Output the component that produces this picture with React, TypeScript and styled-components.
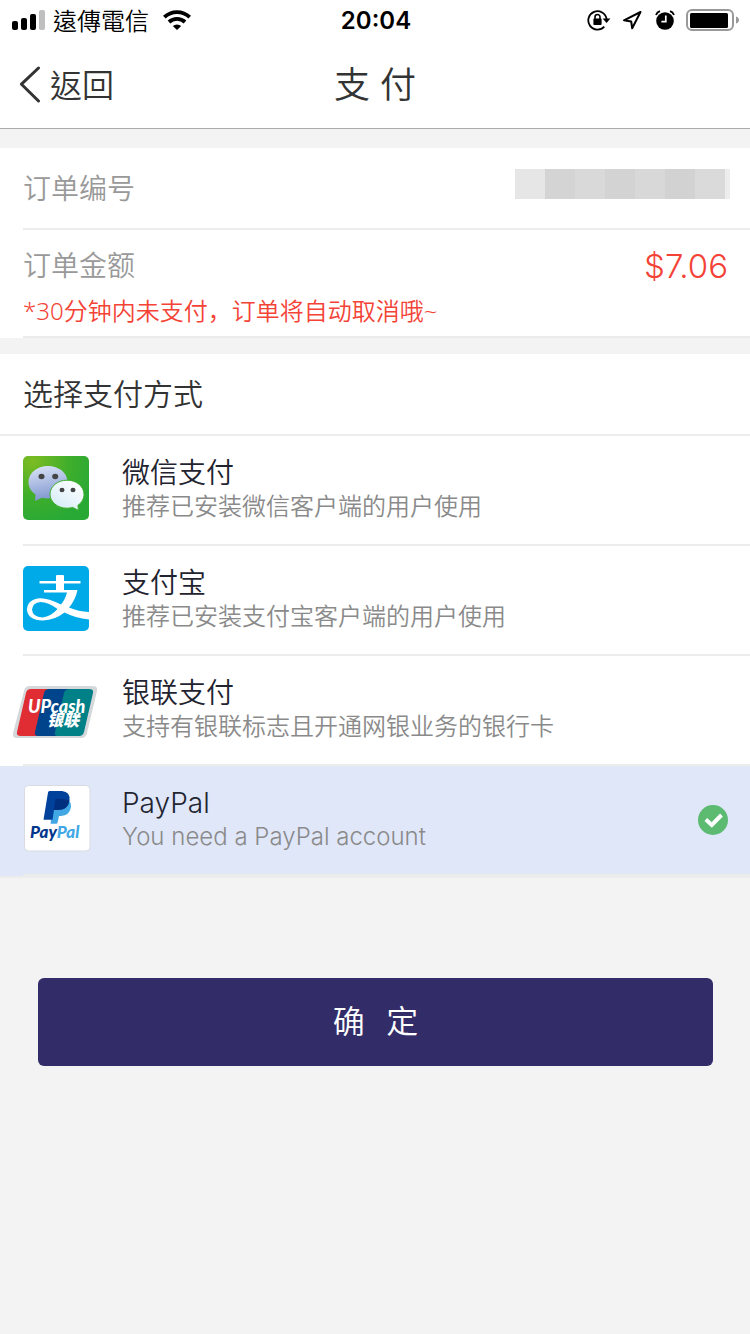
import React, { useState } from 'react';
import styled, { createGlobalStyle } from 'styled-components';

const GlobalStyle = createGlobalStyle`
  *, *::before, *::after { box-sizing: border-box; }
  body {
    margin: 0;
    background: #f3f3f3;
    color: #333;
    font-family: Inter, "Noto Sans CJK SC", sans-serif;
    font-weight: 350;
  }
  h1, h2, p, dl, dt, dd { margin: 0; font-weight: inherit; }
`;

const StatusBar = styled.div`
  display: grid;
  grid-template-columns: 1fr auto 1fr;
  align-items: center;
  height: 40px;
  padding: 0 10px 0 12px;
  background: #fff;
  color: #000;
`;

const StatusGroup = styled.div<{ $end?: boolean }>`
  display: flex;
  align-items: center;
  gap: ${(p) => (p.$end ? 11 : 8)}px;
  justify-content: ${(p) => (p.$end ? 'flex-end' : 'flex-start')};
`;

const Carrier = styled.span`
  margin-right: 6px;
  font: 350 24px/32px "Noto Sans CJK TC", sans-serif;
`;

const Clock = styled.time`
  padding-top: 2px;
  font-size: 24px;
  line-height: 32px;
  font-weight: 600;
`;

const NavBar = styled.header`
  display: grid;
  grid-template-columns: 1fr auto 1fr;
  align-items: center;
  height: 89px;
  padding: 0 18px;
  background: #fff;
  border-bottom: 1px solid #aaa;
`;

const BackButton = styled.button`
  display: flex;
  align-items: center;
  justify-self: start;
  gap: 8px;
  padding: 0;
  border: 0;
  background: none;
  color: #333;
  font: 350 32px/36px "Noto Sans CJK TC", sans-serif;

  span { padding-bottom: 2px; }
`;

const NavTitle = styled.h1`
  padding-top: 2px;
  font-size: 36px;
  line-height: 40px;
`;

const Order = styled.dl`
  margin: 19px 0 16px;
  padding-left: 23px;
  background: #fff;
`;

const OrderRow = styled.div`
  padding: 16px 20px 8px 0;
  border-bottom: 2px solid #ececec;
`;

const OrderLine = styled.div`
  display: flex;
  align-items: center;
  justify-content: space-between;
  min-height: 40px;
  font-size: 28px;
  line-height: 40px;
`;

const OrderNumberRow = styled(OrderRow)`
  padding-top: 21px;
  padding-bottom: 19px;
`;

const Label = styled.dt`
  color: #999;
`;

const Redacted = styled.dd`
  display: flex;
  height: 30px;
  margin-bottom: 10px;
`;

const Block = styled.span<{ $tone: string; $narrow?: boolean }>`
  width: ${(p) => (p.$narrow ? 5 : 30)}px;
  background: ${(p) => p.$tone};
`;

const Amount = styled.dd`
  padding-right: 2px;
  color: #f44336;
  font-size: 33px;
`;

const Notice = styled.p`
  margin-top: 8px;
  color: #f44336;
  font-family: "Noto Sans", "Noto Sans CJK SC", sans-serif;
  font-size: 24px;
  line-height: 34px;
`;

const Methods = styled.fieldset`
  min-width: 0;
  margin: 0;
  padding: 0;
  border: 0;
  border-bottom: 2px solid #ececec;
  background: #fff;
`;

const MethodsTitle = styled.h2`
  padding: 20px 23px;
  border-bottom: 2px solid #ececec;
  font-size: 30px;
  line-height: 40px;
`;

const Method = styled.label<{ $selected: boolean }>`
  display: block;
  padding-left: 23px;
  background: ${(p) => (p.$selected ? '#e0e7f9' : '#fff')};
`;

const MethodBody = styled.span`
  display: flex;
  align-items: center;
  height: 110px;
  padding-right: 22px;
  border-bottom: 2px solid #ececec;
`;

const Logo = styled.span<{ $wide?: boolean }>`
  display: flex;
  flex: 0 0 auto;
  width: ${(p) => (p.$wide ? 109 : 99)}px;
  margin-left: ${(p) => (p.$wide ? -10 : 0)}px;
  padding: ${(p) => (p.$wide ? '4px 0 0' : '0 0 4px')};
`;

const MethodText = styled.span`
  display: flex;
  flex: 1;
  flex-direction: column;
  line-height: 34px;
`;

const MethodName = styled.span`
  color: #1f2430;
  font-size: 28px;
`;

const MethodHint = styled.span`
  color: #8a8a8a;
  font-size: 24px;
`;

const Check = styled.span`
  position: relative;
  display: flex;
  width: 30px;
  height: 30px;

  svg { position: absolute; inset: 0; visibility: hidden; pointer-events: none; }
  input:checked + svg { visibility: visible; }
`;

const Radio = styled.input`
  appearance: none;
  width: 30px;
  height: 30px;
  margin: 0;
  border-radius: 50%;
`;

const Footer = styled.div`
  padding: 100px 37px 40px 38px;
`;

const Confirm = styled.button`
  display: block;
  width: 100%;
  height: 88px;
  border: 0;
  border-radius: 6px;
  padding: 0 0 6px;
  background: #322d68;
  color: #fff;
  font: 350 32px/44px "Noto Sans CJK SC", sans-serif;
`;

const SignalIcon = () => (
  <svg width="33" height="20" viewBox="0 0 33 20" aria-hidden="true">
    <rect x="0" y="11" width="6" height="9" rx="2" />
    <rect x="9" y="8" width="6" height="12" rx="2" />
    <rect x="18" y="4" width="6" height="16" rx="2" />
    <rect x="27" y="0" width="6" height="20" rx="2" fill="#bfbfbf" />
  </svg>
);

const WifiIcon = () => (
  <svg width="28" height="20" viewBox="0 0 28 20" fill="none" stroke="#000" strokeWidth="3.800" aria-hidden="true">
    <path d="M1.300 7.200a18.200 18.200 0 0 1 25.400 0" />
    <path d="M6 12a11.600 11.600 0 0 1 16 0" />
    <path d="M9.800 16.100a6 6 0 0 1 8.400 0L14 20z" fill="#000" stroke="none" />
  </svg>
);

const RotationLockIcon = () => (
  <svg width="24" height="22" viewBox="0 0 24 22" fill="none" stroke="#000" strokeWidth="1.800" aria-hidden="true">
    <path d="M17.300 17.600A9.200 9.200 0 1 1 19.600 10" />
    <path d="M15.600 9.500h7.800L19.600 14z" fill="#000" stroke="none" />
    <rect x="6.400" y="9.400" width="8.200" height="6.600" rx="1" fill="#000" stroke="none" />
    <path d="M8 10V8a2.500 2.500 0 0 1 5 0v2" strokeWidth="1.600" />
  </svg>
);

const LocationIcon = () => (
  <svg width="22" height="22" viewBox="0 0 22 22" fill="none" stroke="#000" strokeWidth="2" strokeLinejoin="round" aria-hidden="true">
    <path d="M18.500 3 2 11.300l7.200 1.200 1 6.800z" />
  </svg>
);

const AlarmIcon = () => (
  <svg width="20" height="20" viewBox="0 0 20 20" fill="none" aria-hidden="true">
    <circle cx="10" cy="11" r="8.800" fill="#000" />
    <path d="M1 5A6 6 0 0 1 5 1.200M19 5A6 6 0 0 0 15 1.200" stroke="#000" strokeWidth="1.800" />
    <path d="M10.800 5.400v6.200H6.400" stroke="#fff" strokeWidth="1.700" />
  </svg>
);

const BatteryIcon = () => (
  <svg width="54" height="24" viewBox="0 0 54 24" fill="none" aria-hidden="true">
    <rect x="1" y="2" width="46" height="20" rx="5" stroke="#999" strokeWidth="2" />
    <rect x="4" y="5" width="38" height="15" rx="1.500" fill="#000" />
    <path d="M50 8.500c4 1 4 6 0 7z" fill="#999" />
  </svg>
);

const ChevronIcon = () => (
  <svg width="24" height="38" viewBox="0 0 24 38" fill="none" stroke="#333" strokeWidth="3" strokeLinecap="round" strokeLinejoin="round" aria-hidden="true">
    <path d="M20.500 3 3.500 19.200 20.500 36" />
  </svg>
);

const WeChatLogo = () => (
  <svg width="66" height="64" viewBox="0 0 66 64" aria-hidden="true">
    <defs>
      <radialGradient id="wxBack" cx=".15" cy=".08" r="1">
        <stop offset="0" stopColor="#7cbc22" />
        <stop offset=".55" stopColor="#3fae2b" />
        <stop offset="1" stopColor="#28a936" />
      </radialGradient>
      <linearGradient id="wxBlue" x1=".3" y1="0" x2=".5" y2="1">
        <stop offset="0" stopColor="#d8e1f5" />
        <stop offset="1" stopColor="#7c93cd" />
      </linearGradient>
      <linearGradient id="wxWhite" x1="0" y1="1" x2=".8" y2="0">
        <stop offset="0" stopColor="#cfe9f8" />
        <stop offset="1" stopColor="#fff" />
      </linearGradient>
    </defs>
    <rect width="66" height="64" rx="5" fill="url(#wxBack)" />
    <path d="M25 10C14 10 5.500 17 5.500 26c0 5.200 2.600 9.500 7 12.400L12 45l7-3.300c2 .5 4 .7 6 .7 11 0 19.500-7.200 19.500-16.400S36 10 25 10z" fill="url(#wxBlue)" />
    <path d="M44 24.200c-9.400 0-17 6.200-17 14s7.600 14 17 14c2 0 4-.3 5.700-.8l5.800 2.900-.6-5c3.800-2.600 6.100-6.600 6.100-11.100 0-7.800-7.600-14-17-14z" fill="url(#wxWhite)" stroke="#3fae2b" strokeWidth="1" />
    <g fill="#444">
      <ellipse cx="18.500" cy="20.500" rx="3" ry="2.700" />
      <ellipse cx="32.200" cy="20.500" rx="3" ry="2.700" />
      <ellipse cx="39" cy="34" rx="2.500" ry="2.200" />
      <ellipse cx="50" cy="34" rx="2.500" ry="2.200" />
    </g>
  </svg>
);

const AlipayLogo = () => (
  <svg width="66" height="65" viewBox="0 0 66 65" aria-hidden="true">
    <rect width="66" height="65" rx="5" fill="#00a9e8" />
    <path
      d="M33 10q0-1 1-1h6q1 0 1 1v5h16.500v2.600H41V24h13.500q-2 10-8.500 17.500 9.500 4 20 4.500v7.500Q52 52 41.500 46.500 32 54 20 54.500 4.500 54 4 43.500 4.500 33 17.500 32.300 25 32.200 38 38.500 42 34 44 26.500H21V24h12v-6.400H16.500V15H33zM34.500 43Q25 36 17.500 36 9.500 36.500 9 43.500q.5 7.500 10.500 8Q28 50.500 34.500 43z"
      fill="#fff"
      fillRule="evenodd"
    />
  </svg>
);

const UnionPayLogo = () => (
  <svg width="84" height="52" viewBox="0 0 84 52" aria-hidden="true">
    <path d="M17 0h63q5 0 4 5L74 47q-1 5-6 5H4q-5 0-4-5L11 5q1-5 6-5z" fill="#d5d8db" />
    <path d="M18 3h18L24 50H8q-5 0-4-4L13 7q1-4 5-4z" fill="#df2d33" />
    <path d="M36 3h24L48 50H25q-4 0-3-4l9-39q1-4 5-4z" fill="#00458c" />
    <path d="M57 3h19q5 0 4 4l-9 39q-1 4-5 4H45q-4 0-3-4l9-39q1-4 6-4z" fill="#008087" />
    <g fill="#fff" fontStyle="italic" fontWeight="900">
      <text x="15" y="27" fontSize="18" fontFamily="Lato, sans-serif">UPcash</text>
      <text x="34" y="40" fontSize="16" fontFamily="Noto Sans CJK SC, sans-serif">银联</text>
    </g>
  </svg>
);

const PayPalLogo = () => (
  <svg width="68" height="67" viewBox="0 0 68 67" aria-hidden="true">
    <rect x="1.500" y=".5" width="65.500" height="65.500" rx="4" fill="#fff" stroke="#d9dbe3" />
    <path d="M31 14h13q4.500 2.500 4 8-1.500 8.500-10 9h-2L34.600 37.500q-.2 1.200-1.400 1.200H27.500z" fill="#41a8e5" />
    <path d="M26.500 6H39q8.500.8 7.500 9.500Q45 25 35 25h-4l-1.500 9.700H20.500L25 7.500Q25.200 6 26.500 6z" fill="#00429b" />
    <path d="M33.500 13.800q7-.6 12.800 1.800Q45 25 35 25h-4l1.300-9.800q.2-1.300 1.200-1.400z" fill="#002f80" />
    <text x="7" y="53" fontSize="17" fontWeight="900" fontStyle="italic" fontFamily="Lato, sans-serif" fill="#00368c">
      Pay<tspan fill="#41a8e5">Pal</tspan>
    </text>
  </svg>
);

const CheckIcon = () => (
  <svg width="30" height="30" viewBox="0 0 30 30" fill="none" aria-hidden="true">
    <circle cx="15" cy="15" r="15" fill="#5cba71" />
    <path d="m7.800 14.500 6 5.500L23.500 10" stroke="#fff" strokeWidth="4" />
  </svg>
);

const redactedTones = ['#e6e6e6', '#d4d4d4', '#d9d9d9', '#d3d3d3', '#d8d8d8', '#d2d2d2', '#dadada', '#ededed'];

const methods = [
  { id: 'wechat', name: '微信支付', hint: '推荐已安装微信客户端的用户使用', logo: <WeChatLogo /> },
  { id: 'alipay', name: '支付宝', hint: '推荐已安装支付宝客户端的用户使用', logo: <AlipayLogo /> },
  { id: 'unionpay', name: '银联支付', hint: '支持有银联标志且开通网银业务的银行卡', logo: <UnionPayLogo />, wide: true },
  { id: 'paypal', name: 'PayPal', hint: 'You need a PayPal account', logo: <PayPalLogo /> },
];

export default function App() {
  const [selected, setSelected] = useState('paypal');

  return (
    <>
      <GlobalStyle />
      <StatusBar>
        <StatusGroup>
          <SignalIcon />
          <Carrier>遠傳電信</Carrier>
          <WifiIcon />
        </StatusGroup>
        <Clock>20:04</Clock>
        <StatusGroup $end>
          <RotationLockIcon />
          <LocationIcon />
          <AlarmIcon />
          <BatteryIcon />
        </StatusGroup>
      </StatusBar>

      <NavBar>
        <BackButton type="button">
          <ChevronIcon />
          <span>返回</span>
        </BackButton>
        <NavTitle>支 付</NavTitle>
      </NavBar>

      <main>
        <Order>
          <OrderNumberRow>
            <OrderLine>
              <Label>订单编号</Label>
              <Redacted>
                {redactedTones.map((tone, i) => (
                  <Block key={tone} $tone={tone} $narrow={i === redactedTones.length - 1} />
                ))}
              </Redacted>
            </OrderLine>
          </OrderNumberRow>
          <OrderRow>
            <OrderLine>
              <Label>订单金额</Label>
              <Amount>$7.06</Amount>
            </OrderLine>
            <Notice>*30分钟内未支付，订单将自动取消哦~</Notice>
          </OrderRow>
        </Order>

        <Methods aria-labelledby="methods-title">
          <MethodsTitle id="methods-title">选择支付方式</MethodsTitle>
          {methods.map((m) => (
            <Method key={m.id} htmlFor={m.id} $selected={selected === m.id}>
              <MethodBody>
                <Logo $wide={m.wide}>{m.logo}</Logo>
                <MethodText>
                  <MethodName>{m.name}</MethodName>
                  <MethodHint>{m.hint}</MethodHint>
                </MethodText>
                <Check>
                  <Radio
                    type="radio"
                    id={m.id}
                    name="method"
                    checked={selected === m.id}
                    onChange={() => setSelected(m.id)}
                  />
                  <CheckIcon />
                </Check>
              </MethodBody>
            </Method>
          ))}
        </Methods>

        <Footer>
          <Confirm type="button">确{'\u00a0\u00a0\u00a0'}定</Confirm>
        </Footer>
      </main>
    </>
  );
}
